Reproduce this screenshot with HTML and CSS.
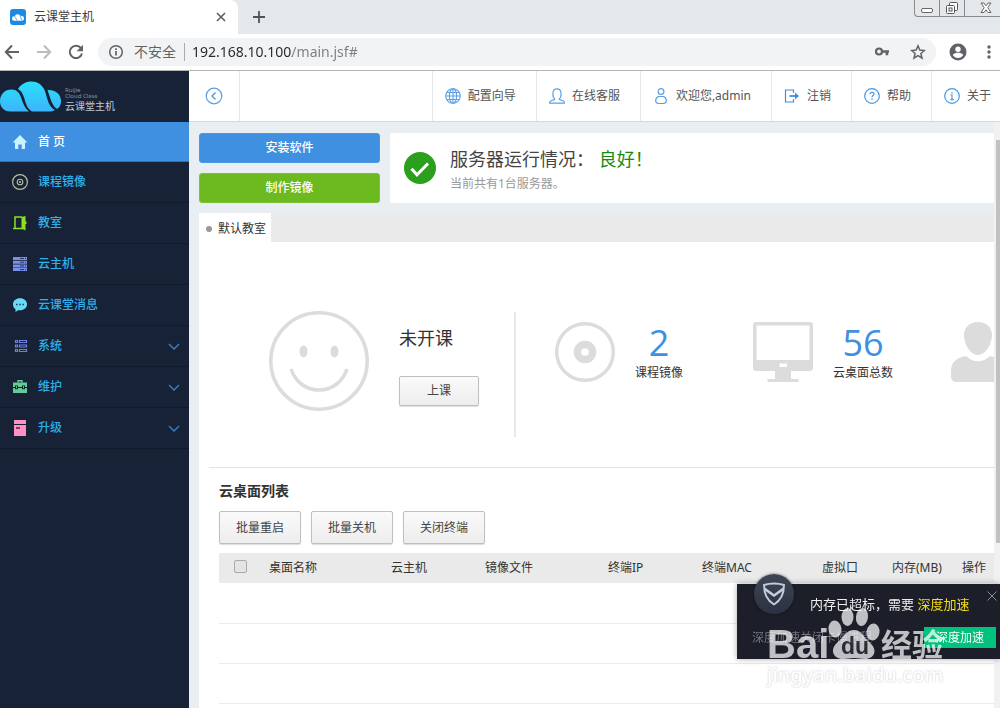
FILE: index.html
```html
<!DOCTYPE html>
<html lang="zh-CN">
<head>
<meta charset="utf-8">
<title>云课堂主机</title>
<link rel="stylesheet" href="styles.css">
</head>
<body>
<div class="browser">
  <div class="tabstrip">
    <div class="tab">
      <svg class="favicon" viewBox="0 0 16 16"><rect width="16" height="16" rx="3" fill="#1e88e5"/><path d="M2 9.500a2.200 2.200 0 0 1 2.700-2.100A3.200 3.200 0 0 1 10.500 7a2.600 2.600 0 0 1 3.500 2.600c0 1.400-1 2.200-2 2.200H4.200A2.200 2.200 0 0 1 2 9.500z" fill="#fff"/><path d="M4.700 7.400l2.500 4M10 6.800l2 4.800" stroke="#1e88e5" stroke-width=".7"/></svg>
      <span class="tab-title">云课堂主机</span>
      <button class="plain" aria-label="关闭标签页"><svg width="10" height="10" viewBox="0 0 10 10"><path d="M1 1l8 8M9 1L1 9" stroke="#5f6368" stroke-width="1.700"/></svg></button>
    </div>
    <button class="plain new-tab" aria-label="新建标签页"><svg width="12" height="12" viewBox="0 0 12 12"><path d="M6 0v12M0 6h12" stroke="#505458" stroke-width="1.800"/></svg></button>
    <div class="window-controls">
      <button class="plain" aria-label="最小化"><svg width="14" height="12" viewBox="0 0 14 12"><rect x="1.500" y="6.500" width="11" height="4" rx="1.500" fill="#fff" stroke="#666"/></svg></button>
      <button class="plain" aria-label="还原"><svg width="14" height="14" viewBox="0 0 14 14"><rect x="4.500" y="1.500" width="8" height="8" rx="1" fill="#fff" stroke="#555"/><rect x="1.500" y="4.500" width="8" height="8" rx="1" fill="#fff" stroke="#555"/><rect x="4" y="7" width="3" height="3" fill="#fff" stroke="#555"/></svg></button>
      <button class="plain close" aria-label="关闭"><svg width="12" height="12" viewBox="0 0 12 12"><path d="M1 1h3l2 2.800L8 1h3L7.800 5.700 11 10.500H8L6 7.800l-2 2.700H1l3.200-4.800z" fill="#fff" stroke="#666"/></svg></button>
    </div>
  </div>
  <div class="toolbar">
    <button class="plain" aria-label="后退"><svg width="16" height="16" viewBox="0 0 16 16"><path d="M15 8H2M8 1.500L1.800 8 8 14.500" fill="none" stroke="#5f6368" stroke-width="2"/></svg></button>
    <button class="plain" aria-label="前进"><svg width="16" height="16" viewBox="0 0 16 16"><path d="M1 8h13M8 1.500L14.200 8 8 14.500" fill="none" stroke="#babcbe" stroke-width="2"/></svg></button>
    <button class="plain" aria-label="刷新"><svg width="16" height="16" viewBox="0 0 16 16"><path d="M13 4.200A6.200 6.200 0 1 0 14 9.500" fill="none" stroke="#5f6368" stroke-width="2"/><path d="M15 .8v6.400H8.600z" fill="#5f6368"/></svg></button>
    <div class="omnibox">
      <svg width="16" height="16" viewBox="0 0 16 16"><circle cx="8" cy="8" r="6.300" fill="none" stroke="#5f6368" stroke-width="1.500"/><path d="M8 7v4.500M8 4.300v1.600" stroke="#5f6368" stroke-width="1.700"/></svg>
      <span class="insecure">不安全</span>
      <input class="url" type="text" aria-label="地址" value="192.168.10.100/main.jsf#">
      <button class="plain" aria-label="密码"><svg width="16" height="16" viewBox="0 0 16 16"><circle cx="5" cy="7.500" r="3" fill="none" stroke="#5f6368" stroke-width="2.200"/><path d="M8 6.200h7v2.600h-.8v2.400h-2.600V8.800H8z" fill="#5f6368"/></svg></button>
      <button class="plain" aria-label="收藏"><svg width="16" height="16" viewBox="0 0 16 16"><path d="M8 1.800l1.800 4.300 4.600.4-3.500 3 1.100 4.600-4-2.500-4 2.500 1.100-4.600-3.500-3 4.600-.4z" fill="none" stroke="#5f6368" stroke-width="1.500"/></svg></button>
    </div>
    <button class="plain account" aria-label="账户"><svg width="18" height="18" viewBox="0 0 18 18"><circle cx="9" cy="9" r="8.500" fill="#5f6368"/><circle cx="9" cy="6.200" r="2.700" fill="#fff"/><path d="M3.800 12c1.200-1.800 3.500-2.200 5.200-2.200s4 .4 5.200 2.200A6 6 0 0 1 9 15a6 6 0 0 1-5.200-3z" fill="#fff"/></svg></button>
    <button class="plain" aria-label="菜单"><svg width="4" height="16" viewBox="0 0 4 16"><g fill="#5f6368"><circle cx="2" cy="3" r="1.700"/><circle cx="2" cy="8" r="1.700"/><circle cx="2" cy="13" r="1.700"/></g></svg></button>
  </div>
</div>

<div class="app">
  <aside class="sidebar">
    <div class="logo">
      <svg width="61" height="31" viewBox="0 0 61 31"><defs><linearGradient id="cloud" x1="0" y1="0" x2="0" y2="31" gradientUnits="userSpaceOnUse"><stop offset="0" stop-color="#27e0fc"/><stop offset="1" stop-color="#3eb4fa"/></linearGradient></defs><g fill="url(#cloud)"><path d="M29 30.500H10C4 30.500 0 26 0 20.500 0 13 5 8.500 11.500 8.500c5 0 8 3 9.500 8 2 6 4 11 8 14z"/><path d="M18 8C21 3 26 .5 31.500.5c7 0 12 4.500 14 11C47.500 19 49 26 55 29c-2 1.500-4 1.500-6 1.500H32C26 27 25.500 20 23.500 15 22 11 20.500 9.500 18 8z"/><path d="M47.500 9C55 8.500 61 13 61 20c0 4-1.500 6.500-4 8-5-3-7-12-9.500-19z"/></g></svg>
      <div class="logo-text"><small>Ruijie</small><small>Cloud Class</small><span>云课堂主机</span></div>
    </div>
    <nav class="menu">
      <a class="menu-item active" href="#"><svg width="16" height="16" viewBox="0 0 16 16"><path d="M8 1l7.500 7.500H13V15H9.700v-4.500H6.300V15H3V8.500H.5z" fill="#c9f3ff"/></svg><span>首 页</span></a>
      <a class="menu-item" href="#"><svg width="16" height="16" viewBox="0 0 16 16"><g fill="none" stroke="#b5bf9c"><circle cx="8" cy="8" r="7.400" stroke-width="1.200"/><circle cx="8" cy="8" r="2.800" stroke-width="1.100"/></g><circle cx="8" cy="8" r="1.100" fill="#b5bf9c"/></svg><span>课程镜像</span></a>
      <a class="menu-item" href="#"><svg width="16" height="16" viewBox="0 0 16 16"><path d="M3 13.500V2h7M1 13.500h10" fill="none" stroke="#8ae31b" stroke-width="1.500"/><path d="M9.500 2l4-1v5.500h1V9h-1v6.500l-4-2z" fill="#8ae31b"/></svg><span>教室</span></a>
      <a class="menu-item" href="#"><svg width="16" height="16" viewBox="0 0 16 16"><path d="M1 1h14v3H1zM1 4.700h14v3H1zM1 8.400h14v3H1zM1 12.100h14v3H1z" fill="#7b90e8"/><path d="M8 2.500h4M8 6.200h4M8 9.900h4M8 13.600h4M13 2.500h1M13 6.200h1M13 9.900h1M13 13.600h1" stroke="#26345f"/></svg><span>云主机</span></a>
      <a class="menu-item" href="#"><svg width="16" height="16" viewBox="0 0 16 16"><path d="M8 1.200c4 0 7 2.500 7 6s-3 6-7 6c-.8 0-1.500 0-2 0L3.500 15v-2.800C2 11 1 9.500 1 7.200c0-3.500 3-6 7-6z" fill="#69dcf5"/><path d="M4 7.500h1.500M7.300 7.500h1.500M10.500 7.500H12" stroke="#17435a" stroke-width="1.300"/></svg><span>云课堂消息</span></a>
      <a class="menu-item" href="#"><svg width="16" height="16" viewBox="0 0 16 16"><g fill="none" stroke="#6d80df" stroke-width="1.200"><path d="M3.500 2.500h2v2h-2zM3.500 7h2v2h-2zM3.500 11.500h2v2h-2zM7.500 2.500h7v2h-7zM7.500 7h7v2h-7zM7.500 11.500h7v2h-7z"/></g></svg><span>系统</span><svg class="chevron" width="12" height="7" viewBox="0 0 12 7"><path d="M1 1l5 5 5-5"/></svg></a>
      <a class="menu-item" href="#"><svg width="16" height="16" viewBox="0 0 16 16"><path d="M6 3.500V1.700h4v1.800" fill="none" stroke="#64ca97" stroke-width="1.400"/><path d="M1 3.500h14v4.500h-2V6.500h-3V8H6V6.500H3V8H1zM1 9h2v1.200h3V9h4v1.200h3V9h2v5H1zM4 7.300h1v2H4zM11 7.300h1v2h-1z" fill="#64ca97"/></svg><span>维护</span><svg class="chevron" width="12" height="7" viewBox="0 0 12 7"><path d="M1 1l5 5 5-5"/></svg></a>
      <a class="menu-item" href="#"><svg width="16" height="16" viewBox="0 0 16 16"><path d="M2 0h12v4H2zM2 5h12v11H2z" fill="#ff8fc4"/><path d="M4 8h4" stroke="#5a2a50" stroke-width="1.600"/></svg><span>升级</span><svg class="chevron" width="12" height="7" viewBox="0 0 12 7"><path d="M1 1l5 5 5-5"/></svg></a>
    </nav>
  </aside>

  <div class="main">
    <header class="topbar">
      <button class="plain collapse" aria-label="收起菜单"><svg width="18" height="18" viewBox="0 0 18 18"><g fill="none" stroke="#5aa0e6" stroke-width="1.200"><circle cx="9" cy="9" r="7.800"/><path d="M10.500 5.500L7 9l3.500 3.500" stroke-width="1.500"/></g></svg></button>
      <nav class="topnav">
        <a href="#"><svg width="16" height="16" viewBox="0 0 16 16"><g fill="none" stroke="#5aa0e6" stroke-width="1.100"><circle cx="8" cy="8" r="7.300"/><ellipse cx="8" cy="8" rx="3.600" ry="7.300"/><path d="M8 .7v14.600M.7 8h14.600M1.800 4.500h12.400M1.800 11.500h12.400"/></g></svg>配置向导</a>
        <a href="#"><svg width="16" height="16" viewBox="0 0 16 16"><path d="M5.500 10.500C3.500 9.500 4 7 4 5c0-2.500 1.500-4.200 4-4.200S12 2.500 12 5c0 2 .5 4.500-1.500 5.500v1l4 1.500c.8.400.9 1.200.9 2.200H.6c0-1 .1-1.800.9-2.200l4-1.500z" fill="none" stroke="#5aa0e6" stroke-width="1.200"/></svg>在线客服</a>
        <a href="#"><svg width="16" height="16" viewBox="0 0 16 16"><g fill="none" stroke="#5aa0e6" stroke-width="1.200"><circle cx="8" cy="3.500" r="2.900"/><path d="M5.500 8.500h5c1.800.8 2.800 2.300 2.800 4 0 2-1.300 3-3.300 3H6c-2 0-3.300-1-3.300-3 0-1.700 1-3.200 2.800-4z"/></g></svg>欢迎您,admin</a>
        <a href="#"><svg width="16" height="16" viewBox="0 0 16 16"><path d="M9.500 5V2h-8v12h8v-3" fill="none" stroke="#3d90e0" stroke-width="1.200"/><path d="M5.500 8h7" stroke="#3d90e0" stroke-width="1.800"/><path d="M11 4.500L15 8l-4 3.500z" fill="#3d90e0"/></svg>注销</a>
        <a href="#"><svg width="16" height="16" viewBox="0 0 16 16"><g fill="none" stroke="#4a98e4" stroke-width="1.200"><circle cx="8" cy="8" r="7.300"/><path d="M6 6.300C6 5 6.800 4.400 8 4.400s2 .7 2 1.700C10 7.500 8 7.700 8 9.300M8 10.500V12"/></g></svg>帮助</a>
        <a href="#"><svg width="16" height="16" viewBox="0 0 16 16"><g fill="none" stroke="#4a98e4" stroke-width="1.200"><circle cx="8" cy="8" r="7.300"/><path d="M6.500 7H8v4.500M6.300 11.700h3.600M8 4v1.500"/></g></svg>关于</a>
      </nav>
    </header>

    <div class="scroller">
      <div class="content">
        <div class="summary">
          <div class="actions">
            <button class="action blue">安装软件</button>
            <button class="action green">制作镜像</button>
          </div>
          <section class="status">
            <svg width="32" height="32" viewBox="0 0 32 32"><circle cx="16" cy="16" r="16" fill="#2d9f1f"/><path d="M7.500 16.800l5.500 6L24 11.500" fill="none" stroke="#fff" stroke-width="3"/></svg>
            <div>
              <h1>服务器运行情况： <em>良好！</em></h1>
              <p>当前共有1台服务器。</p>
            </div>
          </section>
        </div>

        <div class="tabs"><a class="room-tab" href="#"><i></i>默认教室</a></div>

        <div class="panel">
          <section class="overview">
            <svg class="smile" width="100" height="100" viewBox="0 0 100 100"><g fill="none" stroke="#dcdcdc" stroke-width="3.600"><circle cx="50" cy="50" r="48.200"/><path d="M22 58c4 12 14 21 28 21s24-9 28-21"/></g><g fill="#dcdcdc"><ellipse cx="34.500" cy="40.500" rx="4" ry="6"/><ellipse cx="65.500" cy="40.500" rx="4" ry="6"/></g></svg>
            <div class="lesson">
              <h2>未开课</h2>
              <button class="btn start">上课</button>
            </div>
            <div class="stats">
              <div class="stat">
                <svg width="60" height="60" viewBox="0 0 60 60"><g fill="none" stroke="#dcdcdc"><circle cx="30" cy="30" r="28.300" stroke-width="3.400"/><circle cx="30" cy="30" r="7.600" stroke-width="7.500"/></g></svg>
                <div><strong>2</strong><span>课程镜像</span></div>
              </div>
              <div class="stat">
                <svg width="60" height="60" viewBox="0 0 60 60"><path d="M3 0h54a3 3 0 0 1 3 3v43a3 3 0 0 1-3 3H38v8h7.500v3h-31v-3H22v-8H3a3 3 0 0 1-3-3V3a3 3 0 0 1 3-3zm.5 3.500v34.500h53V3.500zM26.500 41.500v3.500h7.500v-3.500z" fill="#dcdcdc" fill-rule="evenodd"/></svg>
                <div><strong>56</strong><span>云桌面总数</span></div>
              </div>
              <div class="stat">
                <svg width="60" height="60" viewBox="0 0 60 60"><path d="M27 0c9 0 14 6 14 13 0 10-7 20-14 20S13 23 13 13C13 6 18 0 27 0zM15 34c7 7 17 7 24 0 10 2 15 6 15 15v5c0 4-2 6-6 6H6c-4 0-6-2-6-6v-5c0-9 5-13 15-15z" fill="#dcdcdc"/></svg>
              </div>
            </div>
          </section>

          <section class="desktops">
            <h3>云桌面列表</h3>
            <div class="btn-row">
              <button class="btn">批量重启</button>
              <button class="btn">批量关机</button>
              <button class="btn">关闭终端</button>
            </div>
            <table>
              <colgroup><col class="c-check"><col class="c-name"><col class="c-host"><col class="c-image"><col class="c-ip"><col class="c-mac"><col class="c-port"><col class="c-mem"><col></colgroup>
              <thead><tr><th class="check"><input type="checkbox" aria-label="全选"></th><th>桌面名称</th><th>云主机</th><th>镜像文件</th><th>终端IP</th><th>终端MAC</th><th>虚拟口</th><th>内存(MB)</th><th>操作</th></tr></thead>
              <tbody><tr><td colspan="9"></td></tr><tr><td colspan="9"></td></tr><tr><td colspan="9"></td></tr></tbody>
            </table>
          </section>
        </div>
      </div>
      <div class="scrollbar"><div class="thumb"></div></div>
    </div>
  </div>
</div>

<div class="toast">
  <div class="badge"><svg width="24" height="24" viewBox="0 0 24 24"><path d="M12 1.500c3.500 0 7 .5 10 1.500 0 8-2.500 15-10 19.500C4.500 18 2 11 2 3c3-1 6.500-1.500 10-1.500z" fill="none" stroke="#c4ccd9" stroke-width="1.900"/><path d="M3 5.500l9 6.500 9-6.500v3.300L12 15 3 8.800z" fill="#c4ccd9"/></svg></div>
  <button class="plain toast-close" aria-label="关闭提示"><svg width="10" height="10" viewBox="0 0 10 10"><path d="M.5.500l9 9M9.500.500l-9 9" stroke="#8b8e96"/></svg></button>
  <p class="toast-title">内存已超标，需要 <b>深度加速</b></p>
  <div class="toast-row"><span>深度加速关闭卡慢进程</span><button class="boost">深度加速</button></div>
</div>

<div class="watermark">
  <div class="brand">
    <span class="bai">Bai</span>
    <span class="paw"><svg width="54" height="56" viewBox="0 0 52 56"><ellipse cx="7" cy="25" rx="6.500" ry="8.500" transform="rotate(-8 7 25)"/><ellipse cx="19.500" cy="13" rx="6" ry="9"/><ellipse cx="34" cy="13" rx="6" ry="9" transform="rotate(8 34 13)"/><ellipse cx="45" cy="28" rx="6.500" ry="8.500" transform="rotate(8 45 28)"/><path d="M26 26c8 0 10 8 15 12 10 8 5 17-4 17-4 0-7-1-11-1s-7 1-11 1C5 55 1 45 10 38c5-4 8-12 16-12z"/></svg><span class="du">du</span></span>
    <span class="jy">经验</span>
  </div>
  <div class="site">jingyan.baidu.com</div>
</div>
</body>
</html>
```
FILE: styles.css
```css
* { box-sizing: border-box; }
html, body { height: 100%; }
body {
  margin: 0;
  display: flex;
  flex-direction: column;
  overflow: hidden;
  background: #fff;
  color: #444;
  font: 12px/18px "Noto Sans", "Noto Sans CJK SC", sans-serif;
}
h1, h2, h3, p { margin: 0; font-weight: 400; }
a { color: inherit; text-decoration: none; }
svg { display: block; flex: none; }
button, input { font: inherit; }
button { cursor: pointer; }
.plain { display: flex; align-items: center; justify-content: center; padding: 0; border: 0; background: none; }

/* Browser frame */
.browser { flex: none; border-bottom: 1px solid #b4b4b4; }
.tabstrip { display: flex; height: 34px; background: #e4e8eb; }
.tab {
  display: flex;
  align-items: center;
  gap: 8px;
  width: 238px;
  padding: 0 12px 0 10px;
  background: #fff;
  border-radius: 0 8px 0 0;
}
.favicon { width: 16px; height: 16px; }
.tab-title { flex: 1; color: #3c4043; }
.new-tab { width: 42px; }
.window-controls {
  display: flex;
  align-self: flex-start;
  width: 86px;
  height: 17px;
  margin-left: auto;
  border: 1px solid #888c90;
  border-width: 0 0 1px 1px;
  border-radius: 0 0 0 4px;
}
.window-controls button { width: 25px; border-right: 1px solid #888c90; }
.window-controls .close { flex: 1; padding-left: 6px; border: 0; }
.toolbar { display: flex; align-items: center; gap: 16px; height: 36px; padding: 0 9px 0 4px; }
.omnibox {
  display: flex;
  flex: 1;
  align-items: center;
  gap: 10px;
  height: 28px;
  margin-left: -2px;
  padding: 0 10px;
  border-radius: 14px;
  background: #f1f3f4;
}
.insecure { padding-right: 8px; border-right: 1px solid #a9abad; color: #5f6368; font-size: 14px; }
.url {
  flex: 1;
  min-width: 0;
  height: 24px;
  margin-left: -3px;
  padding: 0 0 2px;
  border: 0;
  outline: 0;
  background: linear-gradient(90deg, #26282b 100px, #7a7e82 100px) text;
  color: transparent;
  font-size: 14px;
}
.omnibox button { width: 16px; }
.omnibox button:last-child { margin-left: 10px; }
.account { margin: 0 4px 0 -3px; }

/* Sidebar */
.app { display: flex; flex: 1; min-height: 0; }
.sidebar { flex: none; width: 189px; background: #172237; }
.logo { display: flex; align-items: center; gap: 4px; height: 51px; }
.logo-text { display: flex; flex-direction: column; padding-top: 7px; color: #c4c9d2; font-size: 10px; line-height: 14px; }
.logo-text small { color: #8992a2; font-size: 6px; line-height: 6px; }
.menu-item {
  display: flex;
  align-items: center;
  gap: 10px;
  height: 41px;
  padding: 0 9px 0 12px;
  border-bottom: 1px solid #101a2a;
  color: #30b0ea;
  font-weight: 500;
}
.menu-item.active { height: 40px; border-color: #2d73b8; background: #4090e1; color: #fff; }
.chevron { margin-left: auto; fill: none; stroke: #397cbd; stroke-width: 1.5; }

/* Top bar */
.main { display: flex; flex: 1; flex-direction: column; min-width: 0; background: #e9eef3; }
.topbar { display: flex; flex: none; height: 51px; border-bottom: 1px solid #d6d9db; background: #fff; }
.collapse { width: 51px; border-right: 1px solid #e6e6e6; }
.topnav { display: flex; margin-left: auto; }
.topnav a {
  display: flex;
  align-items: center;
  gap: 7px;
  padding: 0 20px 0 12px;
  border-left: 1px solid #e6e6e6;
  color: #555;
  white-space: nowrap;
}
.topnav a:last-child { padding-right: 9px; }

/* Content */
.scroller { display: flex; flex: 1; min-height: 0; }
.content { display: flex; flex: 1; flex-direction: column; min-width: 0; padding: 11px 0 0 10px; overflow: hidden; }
.scrollbar { flex: none; width: 6px; padding: 18px 0 0 2px; background: #f1f1f1; }
.thumb { height: 71%; background: #c1c1c1; }
.summary { display: flex; gap: 10px; }
.actions { display: flex; flex: none; flex-direction: column; gap: 10px; width: 181px; }
.action { height: 30px; padding: 0; border: 1px solid; border-radius: 3px; color: #fff; font-weight: 500; }
.blue { border-color: #4a98e4; background: #4090e1; }
.green { border-color: #7ac23a; background: #6cba20; }
.status { display: flex; flex: 1; align-items: center; gap: 14px; padding-left: 14px; background: #fff; }
.status div { padding-top: 6px; }
.status h1 { font-size: 18px; line-height: 26px; }
.status em { color: #168a12; font-style: normal; }
.status p { line-height: 24px; color: #999; }
.tabs { display: flex; flex: none; height: 29px; margin-top: 10px; background: #eaeaea; }
.room-tab { display: flex; align-items: center; gap: 6px; padding: 2px 5px 0 7px; background: #fff; color: #333; }
.room-tab i { width: 6px; height: 6px; border-radius: 50%; background: #999; }
.panel { flex: 1; padding-left: 10px; background: #fff; }
.overview { display: flex; align-items: center; padding: 69px 0 30px 60px; border-bottom: 1px solid #e2e2e2; overflow: hidden; }
.smile { margin: 0 30px 26px 0; }
.lesson { flex: none; width: 117px; height: 125px; padding-top: 14px; border-right: 2px solid #e8e8e8; }
.lesson h2 { color: #333; font-size: 18px; line-height: 24px; }
.btn {
  height: 33px;
  padding: 0 16px;
  border: 1px solid #bfbfbf;
  border-radius: 2px;
  background: linear-gradient(#fafafa, #ededed);
  box-shadow: 0 1px 1px #ddd;
  color: #444;
}
.start { width: 80px; height: 30px; margin-top: 26px; }
.stats { display: grid; grid-template-columns: repeat(3, 198px); margin: 0 0 44px 39px; width: 0; flex: 1; }
.stat { display: flex; align-items: center; gap: 20px; color: #333; }
.stat div { display: flex; flex-direction: column; align-items: center; }
.stat strong { color: #4090e1; font: 400 36px/42px "Open Sans", sans-serif; }
.desktops { padding: 13px 0 0 10px; }
.desktops h3 { color: #333; font-size: 14px; font-weight: 700; line-height: 20px; }
.btn-row { display: flex; gap: 10px; margin: 10px 0 9px; }
table { width: 100%; border-collapse: collapse; table-layout: fixed; }
th { height: 30px; padding: 0; background: #eaeaea; color: #333; font-weight: 400; text-align: left; white-space: nowrap; }
td { height: 40px; padding: 0; border-bottom: 1px solid #ebebef; }
.check { padding: 0 0 3px 15px; }
.check input { display: block; width: 13px; height: 13px; margin: 0; appearance: none; border: 1px solid #aaa; border-radius: 2px; background: #e4e4e4; }
.c-check { width: 50px; }
.c-name { width: 122px; }
.c-host { width: 94px; }
.c-image { width: 123px; }
.c-ip { width: 94px; }
.c-mac { width: 120px; }
.c-port, .c-mem { width: 70px; }

/* Floating notice */
.toast {
  position: fixed;
  right: 0;
  bottom: 49px;
  width: 263px;
  height: 75px;
  padding: 10px 4px 0 15px;
  background: #1c1f29;
  box-shadow: 0 0 6px #0005;
  color: #eee;
}
.badge {
  position: absolute;
  top: -10px;
  left: 17px;
  display: flex;
  align-items: center;
  justify-content: center;
  width: 40px;
  height: 40px;
  border-radius: 50%;
  background: linear-gradient(#3e4554, #2a3142);
  box-shadow: 0 0 3px #0008;
}
.toast-close { position: absolute; top: 7px; right: 3px; }
.toast-title { padding-left: 58px; font-size: 13px; line-height: 20px; white-space: nowrap; }
.toast-title b { color: #f5dc16; font-weight: 400; }
.toast-row { display: flex; align-items: center; justify-content: space-between; margin-top: 13px; color: #747780; }
.boost { width: 72px; height: 21px; padding: 0; border: 0; background: #00c27c; color: #fff; }

/* Watermark */
.watermark { position: fixed; right: 54px; bottom: 20px; width: 179px; pointer-events: none; color: #fff; }
.brand { display: flex; align-items: flex-end; opacity: .72; }
.bai { width: 60px; font: 700 40px/36px "Liberation Sans", sans-serif; }
.paw { position: relative; padding-bottom: 2px; fill: #fff; }
.du { position: absolute; left: 14px; bottom: 3px; color: #30333b; font: 700 23px/26px "Liberation Sans", sans-serif; }
.jy { font: 700 31px/38px "Noto Sans CJK SC", sans-serif; white-space: nowrap; }
.site { font-size: 20px; font-weight: 500; line-height: 26px; text-shadow: 0 0 2px #bbb; }
```
